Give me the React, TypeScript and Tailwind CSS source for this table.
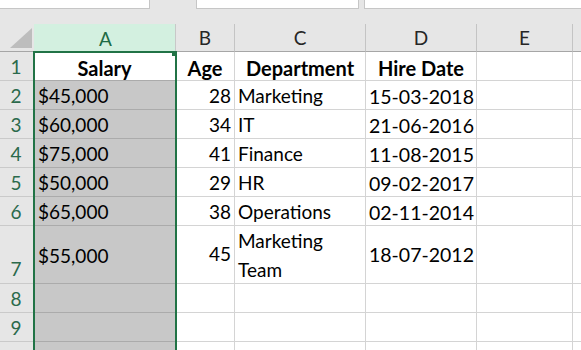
import React from "react";

const rows = [
  { n: "1", a: "Salary", b: "Age", c: "Department", d: "Hire Date", header: true },
  { n: "2", a: "$45,000", b: "28", c: "Marketing", d: "15-03-2018" },
  { n: "3", a: "$60,000", b: "34", c: "IT", d: "21-06-2016" },
  { n: "4", a: "$75,000", b: "41", c: "Finance", d: "11-08-2015" },
  { n: "5", a: "$50,000", b: "29", c: "HR", d: "09-02-2017" },
  { n: "6", a: "$65,000", b: "38", c: "Operations", d: "02-11-2014" },
  { n: "7", a: "$55,000", b: "45", c: "Marketing Team", d: "18-07-2012", tall: true },
  { n: "8", a: "", b: "", c: "", d: "" },
  { n: "9", a: "", b: "", c: "", d: "" },
  { n: "", a: "", b: "", c: "", d: "" },
];

export default function App() {
  return (
    <div
      className="w-[581px] h-[350px] overflow-hidden bg-[#e6e6e6] text-black"
      style={{ fontFamily: "Lato, 'Liberation Sans', sans-serif" }}
    >
      {/* top strip */}
      <div className="h-[24px] flex items-start">
        <div className="w-[150px] h-[9px] bg-white border-r border-b border-[#c6c6c6]" />
        <div className="w-[46px]" />
        <div className="w-[163px] h-[9px] bg-white border border-t-0 border-[#c6c6c6]" />
        <div className="w-[5px]" />
        <div className="flex-1 h-[9px] bg-white border-l border-b border-[#c6c6c6]" />
      </div>

      <div className="relative">
        <div className="grid grid-cols-[34px_142px_59px_131px_111px_96px_8px] grid-rows-[28px_29px_29px_29px_29px_29px_29px_58px_29px_29px_29px] text-[19px]">
          {/* header row */}
          <div className="bg-[#e6e6e6] border-b border-[#a6a6a6] flex items-end justify-end pr-[2px] pb-[3px]">
            <svg width="22" height="20" viewBox="0 0 22 20">
              <polygon points="22,0 22,20 0,20" fill="#bdbdbd" />
            </svg>
          </div>
          <div className="bg-[#d3f0e0] border-r border-[#c8c8c8] flex items-center justify-center text-[#1e6b45] pl-[2px] pt-[2px]">
            A
          </div>
          {["B", "C", "D", "E"].map((l) => (
            <div
              key={l}
              className="bg-[#e6e6e6] border-r border-b border-[#c4c4c4] border-b-[#a6a6a6] flex items-center justify-center text-[#262626] pt-[2px]"
            >
              {l}
            </div>
          ))}
          <div className="bg-[#e6e6e6] border-b border-[#a6a6a6]" />

          {rows.map((r, i) => (
            <React.Fragment key={i}>
              <div
                className={`bg-[#e6e6e6] border-b border-[#cacaca] flex justify-center text-[#2b6a4c] pr-[2px] ${
                  r.tall ? "items-end" : "items-center pt-[3px]"
                }`}
              >
                {r.n}
              </div>
              <div
                className={`border-b border-r border-[#ababab] flex items-center pt-[3px] ${
                  r.header ? "bg-white justify-center font-bold text-[20px]" : "bg-[#c8c8c8] pl-[4px]"
                } ${r.tall ? "pt-[0px]" : ""}`}
              >
                {r.a}
              </div>
              <div
                className={`bg-white border-b border-r border-[#d4d4d4] flex items-center ${
                  r.header ? "justify-center font-bold text-[20px] pt-[3px]" : "justify-end pr-[3px]"
                } ${r.tall ? "" : "pt-[3px]"}`}
              >
                {r.b}
              </div>
              <div
                className={`bg-white border-b border-r border-[#d4d4d4] flex items-center ${
                  r.header ? "justify-center font-bold text-[20px]" : "pl-[3px]"
                } ${r.tall ? "leading-[29px]" : "pt-[3px]"}`}
              >
                {r.tall ? (
                  <span>
                    Marketing
                    <br />
                    Team
                  </span>
                ) : (
                  r.c
                )}
              </div>
              <div
                className={`bg-white border-b border-r border-[#d4d4d4] flex items-center ${
                  r.header ? "justify-center font-bold text-[20px]" : "pl-[3px] text-[19.5px]"
                } ${r.tall ? "" : "pt-[3px]"}`}
              >
                {r.d}
              </div>
              <div className="bg-white border-b border-r border-[#d4d4d4]" />
              <div className="bg-white border-b border-[#d4d4d4]" />
            </React.Fragment>
          ))}
        </div>

        {/* selection border */}
        <div className="absolute left-[33px] top-[27px] w-[144px] bottom-0 border-2 border-b-0 border-[#217346] pointer-events-none" />
        <div className="absolute left-[172px] top-[27px] w-[5px] h-[5px] bg-[#217346]" />
      </div>
    </div>
  );
}
